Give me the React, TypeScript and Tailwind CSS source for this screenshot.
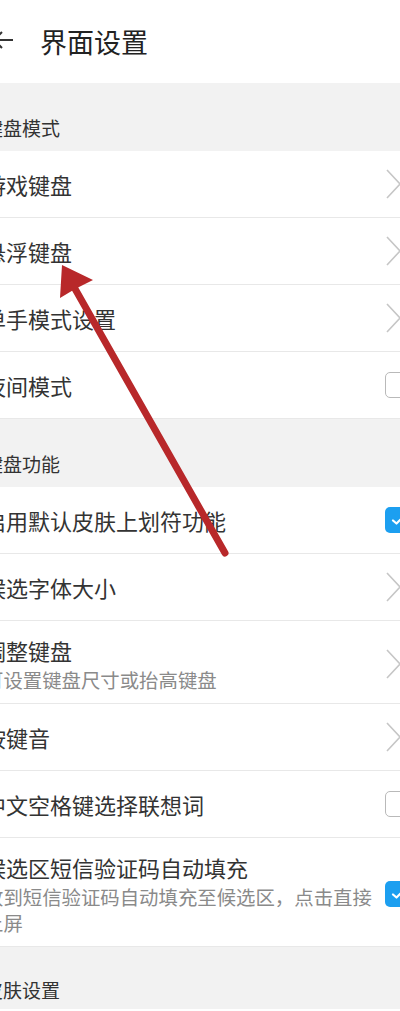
import React from 'react';

type Row = {
  title: string;
  sub?: string;
  right: 'chevron' | 'off' | 'on';
};

const groups: { header: string; rows: Row[] }[] = [
  {
    header: '键盘模式',
    rows: [
      { title: '游戏键盘', right: 'chevron' },
      { title: '悬浮键盘', right: 'chevron' },
      { title: '单手模式设置', right: 'chevron' },
      { title: '夜间模式', right: 'off' },
    ],
  },
  {
    header: '键盘功能',
    rows: [
      { title: '启用默认皮肤上划符功能', right: 'on' },
      { title: '候选字体大小', right: 'chevron' },
      { title: '调整键盘', sub: '可设置键盘尺寸或抬高键盘', right: 'chevron' },
      { title: '按键音', right: 'chevron' },
      { title: '中文空格键选择联想词', right: 'off' },
      {
        title: '候选区短信验证码自动填充',
        sub: '收到短信验证码自动填充至候选区，点击直接上屏',
        right: 'on',
      },
    ],
  },
];

function RightControl({ kind }: { kind: Row['right'] }) {
  if (kind === 'chevron') {
    return (
      <svg width="26" height="30" viewBox="0 0 26 30" fill="none">
        <polyline points="2,1 15,15 2,29" stroke="#c6c6c6" strokeWidth="1.6" strokeLinejoin="miter" />
      </svg>
    );
  }
  if (kind === 'off') {
    return <div className="h-[26px] w-[26px] rounded-[5px] border-[1.5px] border-[#b9b9b9] bg-white" />;
  }
  return (
    <div className="flex h-[26px] w-[26px] items-center justify-center rounded-[5px] bg-[#1c9ff0]">
      <svg width="16" height="16" viewBox="0 0 16 16" fill="none">
        <polyline points="3,8.5 6.5,11.5 13,5" stroke="#fff" strokeWidth="2.2" strokeLinecap="round" strokeLinejoin="round" />
      </svg>
    </div>
  );
}

function SettingRow({ row }: { row: Row }) {
  const tall = !!row.sub;
  return (
    <div
      className={`flex items-center border-b border-[#e8e8e8] pl-4 pr-[7px] ${
        tall ? 'min-h-[67px] pt-[14px] pb-[10px]' : 'h-[67px]'
      }`}
    >
      <div className="min-w-0 flex-1 pr-[8px]">
        <div className="text-[22px] leading-[30px] text-[#333333]">{row.title}</div>
        {row.sub && (
          <div className="mt-[2px] text-[19.4px] leading-[26px] text-[#8a8a8a]">{row.sub}</div>
        )}
      </div>
      <div className="flex w-[26px] shrink-0 items-center">
        <RightControl kind={row.right} />
      </div>
    </div>
  );
}

function SectionHeader({ label, last }: { label: string; last?: boolean }) {
  return (
    <div
      className={`flex items-end bg-[#f2f2f2] pl-4 ${last ? 'h-[62px] pb-[6px]' : 'h-[68px] pb-[10px]'}`}
    >
      <span className="text-[19px] leading-[26px] text-[#333333]">{label}</span>
    </div>
  );
}

export default function App() {
  return (
    <div className="relative h-[1011px] w-[400px] overflow-hidden bg-white font-['Noto_Sans_CJK_SC','Noto_Sans',sans-serif]">
      <div className="-ml-[32px] w-[450px]">
        {/* Top bar */}
        <div className="flex h-[83px] items-center bg-white pl-[21px]">
          <svg width="24" height="24" viewBox="0 0 24 24" fill="none" className="mt-[-3px]">
            <polyline points="13,4 5,12 13,20" stroke="#333" strokeWidth="2" />
            <line x1="5" y1="12" x2="24" y2="12" stroke="#333" strokeWidth="2" />
          </svg>
          <span className="ml-[27px] text-[27px] leading-[36px] text-[#222222]">界面设置</span>
        </div>

        {groups.map((g) => (
          <div key={g.header}>
            <SectionHeader label={g.header} />
            {g.rows.map((r) => (
              <SettingRow key={r.title} row={r} />
            ))}
          </div>
        ))}

        <SectionHeader label="皮肤设置" last />
        <div className="h-[60px] bg-white" />
      </div>

      {/* red annotation arrow */}
      <svg
        className="pointer-events-none absolute left-0 top-0"
        width="400"
        height="1011"
        viewBox="0 0 400 1011"
      >
        <line x1="225" y1="553" x2="74" y2="287" stroke="#b8282a" strokeWidth="7" strokeLinecap="round" />
        <polygon points="62,265 93,280 75,289 60,298" fill="#b8282a" />
      </svg>
    </div>
  );
}
